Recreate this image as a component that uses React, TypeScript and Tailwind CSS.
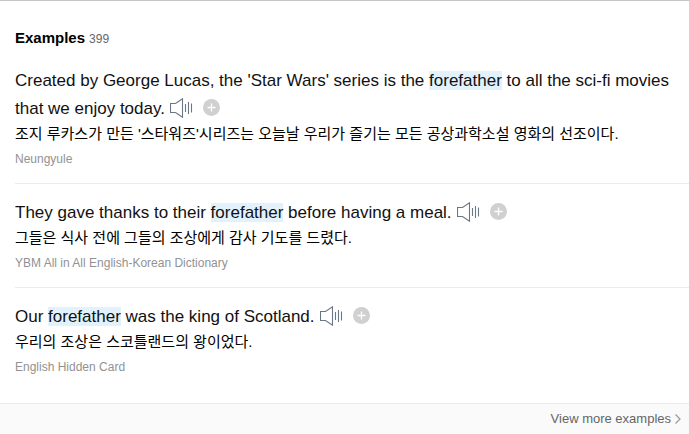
import React from "react";

type Example = {
  before: string;
  after: string;
  translation: string;
  source: string;
};

const examples: Example[] = [
  {
    before: "Created by George Lucas, the 'Star Wars' series is the ",
    after: " to all the sci-fi movies that we enjoy today.",
    translation: "조지 루카스가 만든 '스타워즈'시리즈는 오늘날 우리가 즐기는 모든 공상과학소설 영화의 선조이다.",
    source: "Neungyule",
  },
  {
    before: "They gave thanks to their ",
    after: " before having a meal.",
    translation: "그들은 식사 전에 그들의 조상에게 감사 기도를 드렸다.",
    source: "YBM All in All English-Korean Dictionary",
  },
  {
    before: "Our ",
    after: " was the king of Scotland.",
    translation: "우리의 조상은 스코틀랜드의 왕이었다.",
    source: "English Hidden Card",
  },
];

function SpeakerIcon() {
  return (
    <svg width="23" height="20" viewBox="0 0 23 20" fill="none" stroke="#6b7787" strokeWidth="1.1" aria-hidden="true">
      <path d="M.5 5.5h5l7-4.7v18.4l-7-4.7h-5z" />
      <path d="M15.5 6v8M18.5 4v12M21.5 5.5v9" />
    </svg>
  );
}

function PlusIcon() {
  return (
    <svg width="17" height="17" viewBox="0 0 17 17" aria-hidden="true">
      <circle cx="8.5" cy="8.5" r="8.5" fill="#d0d0d0" />
      <path d="M8.5 4.5v8M4.5 8.5h8" stroke="#fff" strokeWidth="1.3" />
    </svg>
  );
}

function ExampleItem({ before, after, translation, source }: Example) {
  return (
    <li className="border-b border-[#ededed] pt-[15px] pb-3.5 last:border-transparent">
      <p className="text-[17px] leading-7 text-[#111]">
        {before}
        <mark className="bg-[#e2f2fd] text-inherit">forefather</mark>
        {after}
        <span className="-my-1 ml-[5px] inline-flex items-center gap-2.5 pb-1 align-middle">
          <button type="button" aria-label="Listen">
            <SpeakerIcon />
          </button>
          <button type="button" aria-label="Add to wordbook">
            <PlusIcon />
          </button>
        </span>
      </p>
      <p lang="ko" className="text-[15px] leading-[22px] text-black">{translation}</p>
      <p className="mt-1 text-xs leading-5 text-[#929292]">{source}</p>
    </li>
  );
}

export default function App() {
  return (
    <section className="border-t border-[#c4c4c4] bg-white font-['Liberation_Sans','Noto_Sans_CJK_KR',sans-serif]">
      <header className="flex items-baseline gap-1 px-[15px] pt-[27px] pb-[3px]">
        <h2 className="text-[15px] leading-5 font-bold text-black">Examples</h2>
        <span className="text-xs leading-5 text-[#666]">399</span>
      </header>
      <ul className="pl-[15px]">
        {examples.map((example) => (
          <ExampleItem key={example.source} {...example} />
        ))}
      </ul>
      <footer className="mt-[11px] flex justify-end border-t border-[#ededed] bg-[#fafafa] px-2 py-1">
        <a href="#more" className="flex items-center gap-1 text-[13px] leading-[22px] text-[#666]">
          View more examples
          <svg width="6" height="10" viewBox="0 0 6 10" fill="none" stroke="#999" strokeWidth="1.2" aria-hidden="true">
            <path d="M.5.5L5 5 .5 9.5" />
          </svg>
        </a>
      </footer>
    </section>
  );
}
